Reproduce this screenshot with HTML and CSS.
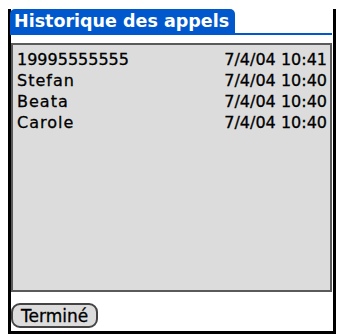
FILE: index.html
```html
<!DOCTYPE html>
<html lang="fr">
<head>
    <meta charset="UTF-8">
    <title>Historique des appels</title>
    <link rel="stylesheet" href="styles.css">
</head>
<body>
    <div class="form">
        <!-- Titre -->
        <div class="title-bar">
            <span class="title-tab">Historique des appels</span>
        </div>

        <!-- Liste des appels -->
        <ul class="call-list">
            <li><span>19995555555</span><span>7/4/04 10:41</span></li>
            <li><span class="name">Stefan</span><span>7/4/04 10:40</span></li>
            <li><span class="name">Beata</span><span>7/4/04 10:40</span></li>
            <li><span class="name">Carole</span><span>7/4/04 10:40</span></li>
        </ul>

        <button type="button" class="btn">Terminé</button>
    </div>
</body>
</html>
```

FILE: styles.css
```css
body {
    margin: 0;
    background: #fff;
    font-family: "DejaVu Sans", Verdana, sans-serif;
}

.form {
    box-sizing: border-box;
    width: 328px;
    height: 325px;
    margin: 9px 0 0 8px;
    border: 3px solid #000;
    border-top: none;
    padding: 0 1px 0 0;
    display: flex;
    flex-direction: column;
}

/* Titre */
.title-bar {
    display: flex;
    border-bottom: 2px solid #0058cc;
    margin-left: -1px;
}
.title-tab {
    background: #0058cc;
    color: #fff;
    font-weight: bold;
    font-size: 17.5px;
    line-height: 23px;
    padding: 1px 6px 0 4px;
    border-radius: 5px 5px 0 0;
}

/* Liste */
.call-list {
    list-style: none;
    margin: 8px 0 0;
    padding: 4px 3px 0 4px;
    height: 249px;
    box-sizing: border-box;
    background: #dcdcdc;
    border: 2px solid #5a5a5a;
}
.call-list li {
    display: flex;
    justify-content: space-between;
    font-size: 16px;
    line-height: 21px;
    color: #000;
    -webkit-text-stroke: 0.3px #000;
}
.call-list .name {
    letter-spacing: 1px;
}

.btn {
    align-self: flex-start;
    margin-top: 11px;
    height: 25px;
    padding: 0 8px;
    font-family: "DejaVu Sans", Verdana, sans-serif;
    font-size: 17px;
    color: #000;
    background: #dcdcdc;
    border: 2px solid #444;
    border-radius: 9px;
    line-height: 20px;
    -webkit-text-stroke: 0.3px #000;
}
```
